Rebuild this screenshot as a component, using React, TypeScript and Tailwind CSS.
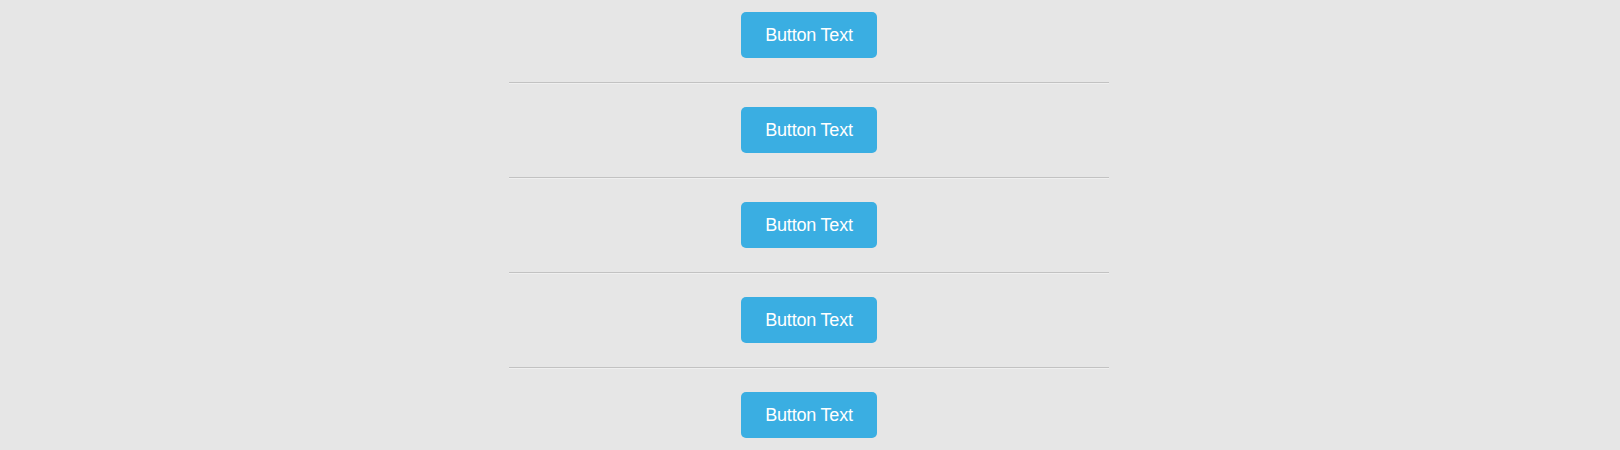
import React from "react";

export default function App() {
  const items = [0, 1, 2, 3, 4];
  return (
    <div className="w-[1620px] h-[450px] bg-[#e6e6e6] overflow-hidden pt-3" style={{ fontFamily: '"Liberation Sans", Arial, sans-serif' }}>
      <div className="w-[600px] ml-[509px] flex flex-col">
        {items.map((i) => (
          <div key={i} className="flex flex-col">
            {i > 0 && <div className="h-px bg-[#c2c2c2] shadow-[0_1px_0_#efefef]" />}
            <div className={i > 0 ? "flex justify-center pt-6 pb-6" : "flex justify-center pb-6"}>
              <button className="w-[136px] h-[46px] rounded-[5px] bg-[#3aaee2] text-white text-[18px] tracking-[-0.2px]">
                Button Text
              </button>
            </div>
          </div>
        ))}
      </div>
    </div>
  );
}
